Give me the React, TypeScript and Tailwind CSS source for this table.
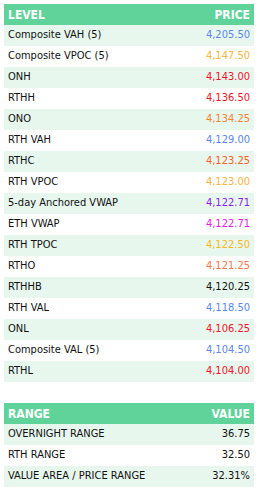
const levels = [
  { name: 'Composite VAH (5)', price: '4,205.50', color: 'text-[#5b86f0]' },
  { name: 'Composite VPOC (5)', price: '4,147.50', color: 'text-[#f7b43e]' },
  { name: 'ONH', price: '4,143.00', color: 'text-[#f2142c]' },
  { name: 'RTHH', price: '4,136.50', color: 'text-[#f2142c]' },
  { name: 'ONO', price: '4,134.25', color: 'text-[#f5822f]' },
  { name: 'RTH VAH', price: '4,129.00', color: 'text-[#5b86f0]' },
  { name: 'RTHC', price: '4,123.25', color: 'text-[#f5622a]' },
  { name: 'RTH VPOC', price: '4,123.00', color: 'text-[#f7b43e]' },
  { name: '5-day Anchored VWAP', price: '4,122.71', color: 'text-[#8a1ee8]' },
  { name: 'ETH VWAP', price: '4,122.71', color: 'text-[#e81ee0]' },
  { name: 'RTH TPOC', price: '4,122.50', color: 'text-[#f5b71e]' },
  { name: 'RTHO', price: '4,121.25', color: 'text-[#f5784c]' },
  { name: 'RTHHB', price: '4,120.25', color: 'text-[#111111]' },
  { name: 'RTH VAL', price: '4,118.50', color: 'text-[#5b86f0]' },
  { name: 'ONL', price: '4,106.25', color: 'text-[#f2142c]' },
  { name: 'Composite VAL (5)', price: '4,104.50', color: 'text-[#5b86f0]' },
  { name: 'RTHL', price: '4,104.00', color: 'text-[#f2142c]' },
];

const ranges = [
  { name: 'OVERNIGHT RANGE', value: '36.75' },
  { name: 'RTH RANGE', value: '32.50' },
  { name: 'VALUE AREA / PRICE RANGE', value: '32.31%' },
];

const font = "font-['DejaVu_Sans_Condensed',sans-serif]";

const Header = ({ left, right }: { left: string; right: string }) => (
  <div className="flex h-[21px] items-center justify-between bg-[#5fd39a] px-1 text-[12px] font-bold text-white">
    <span>{left}</span>
    <span>{right}</span>
  </div>
);

export default function App() {
  return (
    <div className={`bg-white p-1 text-[11px] text-[#111] ${font}`}>
      <Header left="LEVEL" right="PRICE" />
      {levels.map((l, i) => (
        <div
          key={l.name}
          className={`flex h-[21px] items-center justify-between px-1 ${i % 2 === 0 ? 'bg-[#e7f7ee]' : 'bg-white'}`}
        >
          <span>{l.name}</span>
          <span className={l.color}>{l.price}</span>
        </div>
      ))}
      <div className="h-[21px]" />
      <Header left="RANGE" right="VALUE" />
      {ranges.map((r, i) => (
        <div
          key={r.name}
          className={`flex h-[21px] items-center justify-between px-1 ${i % 2 === 0 ? 'bg-[#e7f7ee]' : 'bg-white'}`}
        >
          <span>{r.name}</span>
          <span>{r.value}</span>
        </div>
      ))}
    </div>
  );
}
